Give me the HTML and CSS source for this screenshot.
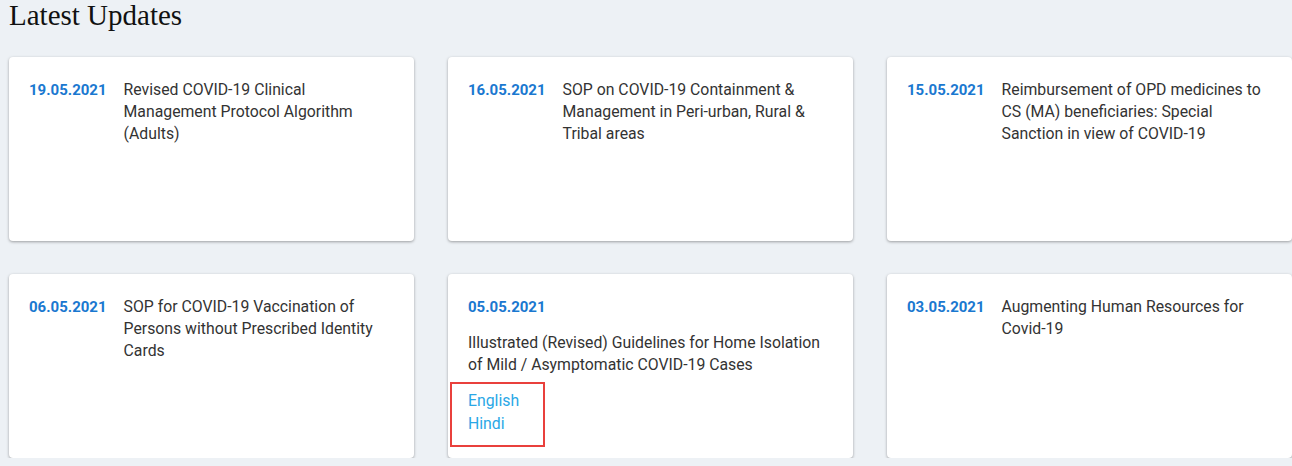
FILE: index.html
```html
<!DOCTYPE html>
<html>
<head>
<meta charset="utf-8">
<link rel="stylesheet" href="styles.css">
</head>
<body>
<div class="page">
  <h2 class="heading">Latest Updates</h2>
  <div class="grid">
    <div class="card row">
      <div class="date">19.05.2021</div>
      <div class="title">Revised COVID-19 Clinical Management Protocol Algorithm (Adults)</div>
    </div>
    <div class="card row">
      <div class="date">16.05.2021</div>
      <div class="title">SOP on COVID-19 Containment &amp; Management in Peri-urban, Rural &amp; Tribal areas</div>
    </div>
    <div class="card row">
      <div class="date">15.05.2021</div>
      <div class="title">Reimbursement of OPD medicines to CS (MA) beneficiaries: Special Sanction in view of COVID-19</div>
    </div>
    <div class="card row">
      <div class="date">06.05.2021</div>
      <div class="title">SOP for COVID-19 Vaccination of Persons without Prescribed Identity Cards</div>
    </div>
    <div class="card stack">
      <div class="date">05.05.2021</div>
      <div class="title wide">Illustrated (Revised) Guidelines for Home Isolation of Mild / Asymptomatic COVID-19 Cases</div>
      <div class="links">
        <a href="#">English</a>
        <a href="#">Hindi</a>
      </div>
    </div>
    <div class="card row">
      <div class="date">03.05.2021</div>
      <div class="title">Augmenting Human Resources for Covid-19</div>
    </div>
  </div>
</div>
</body>
</html>
```
FILE: styles.css
```css
html, body {
  margin: 0;
  padding: 0;
  background: #edf1f5;
}
.page {
  padding: 0 0 0 9px;
  width: 1283px;
}
.heading {
  font-family: "Liberation Serif", "Times New Roman", serif;
  font-weight: normal;
  font-size: 29px;
  line-height: 30px;
  color: #111;
  margin: 0;
  height: 57px;
}
.grid {
  display: grid;
  grid-template-columns: repeat(3, 405px);
  grid-auto-rows: 184px;
  column-gap: 34px;
  row-gap: 33px;
}
.card {
  background: #fff;
  border-radius: 4px;
  box-shadow: 0 1px 3px rgba(0, 0, 0, 0.35);
  padding: 22px 20px 0 20px;
  box-sizing: border-box;
  font-family: Roboto, "Liberation Sans", sans-serif;
  font-size: 15.8px;
  line-height: 22px;
  color: #333;
}
.row {
  display: flex;
  gap: 17px;
}
.date {
  color: #1a78d0;
  font-weight: bold;
  font-size: 15px;
  flex: 0 0 auto;
}
.row .title {
  flex: 1;
  padding-right: 10px;
}
.stack .title {
  margin-top: 14px;
}
.links {
  display: flex;
  flex-direction: column;
  margin: 6px 0 0 -18px;
  width: 95px;
  height: 65px;
  box-sizing: border-box;
  border: 2px solid #e9403c;
  padding: 5px 0 0 16px;
  line-height: 23px;
}
.links a {
  color: #2aa7e6;
  text-decoration: none;
}
```
